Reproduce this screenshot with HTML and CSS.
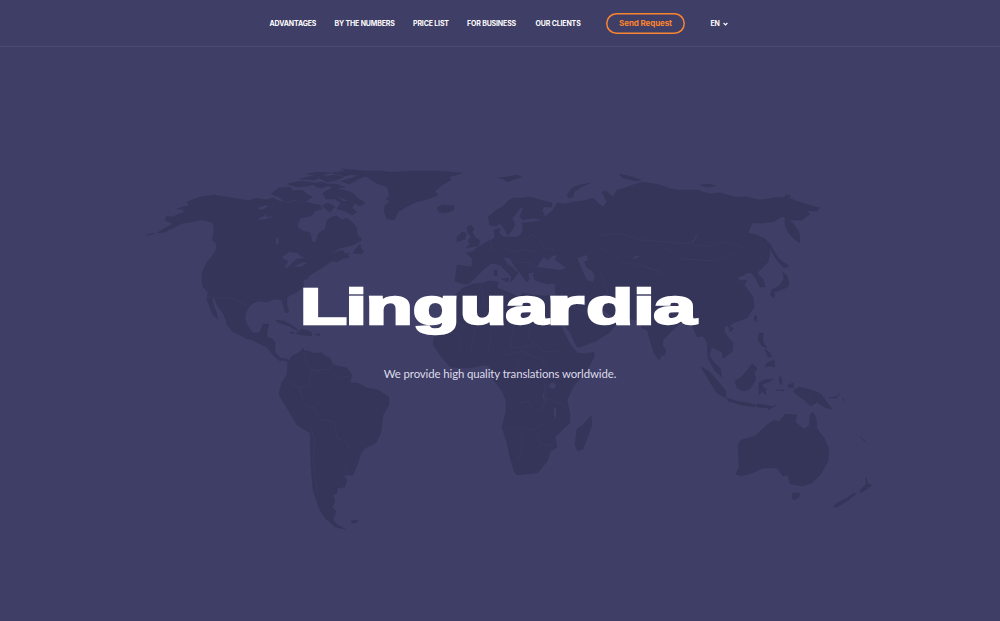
FILE: index.html
```html
<!DOCTYPE html>
<html lang="en">
<head>
<meta charset="utf-8">
<title>Linguardia</title>
<link rel="stylesheet" href="styles.css">
</head>
<body>
<div class="page">
  <svg class="map" viewBox="0 0 1000 621" aria-hidden="true">
    <g class="land">
      <!-- North and Central America -->
      <path d="M165 220L167 216 172 217 177 215 182 213 185 211 181 209 177 209 183 207 189 206 187 202 190 201 200 197 207 196 215 195 225 197 240 199 248 201 257 198 265 200 273 198 279 201 287 203 297 201 307 202 314 204 320 205 322 209 315 211 311 216 300 218 297 227 303 231 310 233 312 242 316 242 318 234 325 229 327 220 332 217 337 216 342 220 347 218 353 223 357 228 357 234 362 240 353 245 340 248 333 252 330 257 336 252 343 250 345 254 350 253 346 257 337 262 332 261 323 267 315 272 310 275 307 279 303 280 304 286 297 292 290 295 287 298 287 305 289 312 286 313 284 309 282 300 274 299 267 302 259 301 253 303 249 307 246 312 245 318 247 325 253 333 258 333 261 330 263 324 269 324 267 331 267 337 272 339 275 342 275 352 280 358 287 359 288 362 283 360 280 361 273 355 267 347 260 344 253 340 247 339 240 335 233 332 227 325 226 320 223 313 218 307 214 297 212 299 214 306 217 315 218 319 213 315 210 308 207 299 208 292 203 287 202 282 202 273 206 264 213 255 217 248 216 243 212 240 214 232 213 223 208 221 200 220 192 222 183 223 175 227 165 232 157 233 165 228 173 224z"/>
      <!-- Canadian archipelago -->
      <path d="M271 194L279 188 290 187 293 191 302 190 307 194 312 197 306 201 294 200 285 202 279 197zM287 184l14-3 14 2-6 3-12 1zM300 179l16-4 10 1-12 4zM306 174l12-2 12 1-8 2zM312 184l9-2 8 3-7 3-6-1zM320 178l15-3 9 2-10 4-8 1zM331 173l14-2 10 2-9 3zM341 181l11-3 8-3 10-1-11 5-10 5z"/>
      <path d="M323 193L332 188 344 190 352 193 359 199 365 203 360 206 354 203 352 208 357 212 352 215 345 211 337 209 341 203 335 199 326 199zM341 174l15-3 26 0 12 2-18 3-17-1zM322 206l6-3 7 4-5 5zM326 184l10 0 9 3-11 2zM341 169l14 1 8 1-11 2z"/>
      <path d="M353 253L355 250 360 244 361 248 364 252 361 254zM276 320l8 1 12 7 2 3-9-5-12-4zM301 329l10 3 1 4-8-1-8-1zM289 332l5 0 0 2zM315 334l5 0-1 2zM146 235l8-2 0 1zM341 258l8-2-1 2z"/>
      <!-- Greenland and Iceland -->
      <path d="M366 176L381 173 411 171 438 171 462 173 449 177 451 180 442 185 435 191 438 195 428 199 416 202 406 207 398 212 394 220 387 219 384 211 385 205 390 202 386 199 390 196 387 187 376 183z"/>
      <path d="M437 208l5-3 12 1 0 4-8 3-7-1z"/>
      <!-- South America -->
      <path d="M288 362L292 356 300 352 303 348 304 351 308 351 313 353 322 353 325 356 330 358 333 365 347 368 352 375 350 383 357 383 367 388 378 390 389 397 389 405 383 415 381 432 376 443 365 448 361 453 358 463 353 475 343 475 347 480 345 487 337 488 337 493 333 495 335 502 332 507 336 511 333 520 338 525 345 529 335 527 325 518 320 510 313 490 311 467 310 433 297 425 287 408 279 395 280 389 282 382 287 375z"/>
      <path d="M351 521l6-1 1 2-6 1z"/>
      <!-- Europe and Asia -->
      <path d="M457 265L472 267 472 258 466 253 472 252 478 247 487 242 495 238 494 230 500 228 499 233 503 237 517 237 521 234 523 230 522 223 532 222 543 220 533 218 523 220 520 217 522 211 524 208 520 208 516 214 512 218 515 225 512 230 508 235 505 230 500 223 496 226 490 225 488 217 495 211 502 207 507 202 513 198 521 198 530 197 540 200 552 203 552 207 544 207 542 210 545 217 553 210 557 203 565 204 573 202 583 201 593 198 598 203 603 207 607 202 602 192 606 191 613 197 617 190 625 188 633 185 643 182 660 185 668 188 677 190 697 190 710 194 720 193 735 197 747 197 760 200 773 198 787 197 796 201 803 203 812 206 820 208 817 211 807 211 810 214 802 220 790 220 795 226 799 232 800 243 793 238 788 232 785 225 785 217 781 217 773 222 760 223 752 223 748 233 757 235 763 238 768 243 770 252 768 262 760 270 757 273 763 279 765 287 760 287 755 277 751 273 747 273 742 276 737 277 740 281 747 280 744 285 748 290 753 297 754 307 747 318 733 323 729 327 725 325 724 332 733 343 732 352 723 358 722 352 717 350 712 347 709 355 713 361 720 368 722 377 715 371 708 358 707 342 703 336 697 337 693 327 688 322 680 323 663 340 662 355 659 360 654 353 647 330 643 329 637 320 624 318 612 317 606 312 598 306 606 317 615 319 617 323 610 332 596 341 580 347 577 347 571 334 563 323 558 308 556 300 555 283 548 284 540 282 535 280 533 275 535 272 528 273 529 279 527 282 520 273 515 267 510 258 503 257 508 265 513 268 518 273 515 277 511 282 511 276 500 265 492 263 485 268 480 273 473 280 468 284 463 284 455 281z"/>
      <path d="M467 227L471 225 474 229 472 232 475 237 480 241 478 246 471 247 466 248 470 244 468 241 471 237 468 233zM457 237l5-5 4 1-1 6-8 3zM494 270l3 0 0 6-3-1zM501 279l8-1-1 4zM498 178l8-1 11-2 5 2-10 3-4 2-5-3zM567 195l5-7 8-3 10-2-9 4-7 5-1 5-4 1zM619 174l10 2 12 4-5 1-13-3zM700 185l10-1 6 2-9 1zM785 195l6 1-5 1zM763 237L770 244 778 258 786 264 789 266 784 268 779 263 772 252zM783 272L787 276 789 282 788 287 778 291 772 293 771 290 779 286 784 279zM771 293l4 1-1 4-4-3zM755 315l2 2-1 5-2-3zM729 327l5 1-4 4zM759 333l4 0 0 9 4 6-5-2-4-6zM765 349l4 3 3 5-4 0zM767 363l7-3 1 7-5-1-5 1zM662 345l4 5-2 6-3-3z"/>
      <!-- Africa and Madagascar -->
      <path d="M463 288L473 284 483 283 490 281 498 282 497 288 508 292 518 297 523 293 532 295 545 296 553 295 555 300 551 301 557 313 563 330 568 340 572 347 578 353 586 354 594 352 594 357 587 370 573 387 567 400 570 414 570 423 563 429 555 437 557 447 550 452 548 460 541 469 537 473 526 474 517 475 514 471 510 457 507 443 502 427 506 412 506 400 502 391 496 383 492 378 492 370 488 366 483 365 475 367 467 368 450 367 440 355 433 345 434 336 436 330 447 317 449 307 453 297z"/>
      <path d="M591 416L592 424 588 436 583 449 578 451 575 445 577 429 583 425z"/>
      <!-- Indonesia, the Philippines and New Guinea -->
      <path d="M701 367L709 371 720 384 726 391 726 398 717 393 710 382zM727 398l9 3 13 2 7 2-1 2-13-2-14-4zM757 404l9 1 7 2-3 1-13-1zM768 409l8-4-7 5zM735 381L740 378 745 373 752 364 757 368 754 374 756 379 750 389 744 391 737 388zM759 383l5-3 9-1-4 3-7 2 1 4 4 1-2 1 1 5-4-4-3 4zM780 376l2 4-1 5-2-4zM788 385l5-2 1 5-6-1zM776 390l8 0 0 1zM793 391L799 387 812 390 821 394 826 401 832 409 826 408 817 402 811 406 803 399 796 394zM829 398l9-2 1-3-3 5zM842 398l3 2 0 1zM860 437l6 5-2-1z"/>
      <!-- Australia and New Zealand -->
      <path d="M736 474L739 467 738 445 741 440 755 436 767 425 774 420 779 422 785 414 797 415 795 422 804 429 809 426 810 415 813 412 816 418 817 429 824 438 829 449 828 461 821 474 812 483 803 486 790 484 788 475 783 476 777 468 763 468 752 473 741 476z"/>
      <path d="M793 493l7 0-1 4-5 3-2-2zM866 477l2 7 4 1-5 4-7 4 1-4 5-5zM854 493l2 1-9 7-10 6-4 0 4-4 10-5z"/>
    </g>
    <!-- Lakes and inland seas -->
    <g class="water">
      <path d="M537 267L543 257 548 260 552 256 557 255 555 260 566 268 560 270 545 268zM577 258L587 255 588 260 584 262 587 268 592 271 595 277 593 282 587 280 584 274zM690 243l5-5 1-4 1 3-4 5-3 1zM282 257l7-5 8 1 7 5-7 1-6 5-5 5-1-2 3-6-3-1zM294 266l10-4 3 1-7 4zM276 239l2-2 1 4-1 4-2-1zM257 208l9-3 3 1-7 4zM258 219l6-3 2-2 0 3 9-1-9 3-6 1zM549 384l5-2 2 3-2 4-4-1zM543 389l1 8 3 7-4-6zM554 407l2 1 0 12-2-5z"/>
      <path d="M532 222l9-1-5 1zM633 257l9-2-7 4zM337 196l11 5-5 0z"/>
    </g>
    <g class="borders">
      <path d="M218 251h58M205 297l30 2 12 7M490 239l2 10-7 5M500 244l9 8 15-2 14 2M500 259l18 3 13 1M524 241l8-7 7 6 6 8 10 2M506 265l9 11M530 263l7 5M600 235l22-1 20 6 25 2 25 2 15 3 18-5 22 6M600 247l23 15 15 4M640 265l23 8M665 248l18 11 32 2 20-9M569 285v20l19 8M600 270l8 24M560 280l-7 10"/>
      <path d="M447 300v18l20 10 25 0 12-16M481 284l3 20 25 18M532 295v22M504 312l10 16-4 20 22-2M447 330l12 6 0 20M475 328l-4 22M491 332l-3 22M532 314l-4 24 16 14 18-2M505 355l17-4 20 9M502 377l15-6 2-12M519 403l10-2 4 8 9 0 4-8-2-18M503 428h20l12 2 10-8M522 430v18l-4 12M535 432l6 12 12 2M541 358l8 14 14 8M548 399l17 6"/>
      <path d="M304 354l3 12 15 8M286 380l14 8 9-3 2-14 20-2 5-10M299 389l6 16 10 3 5 11 15 3 2 16 10 4 2 7M309 424l6 16-2 20 4 30M342 465l7 9M332 370l4 8 14-2M810 391v12"/>
    </g>
  </svg>

  <header class="header">
    <nav class="nav">
      <a class="link advantages">ADVANTAGES</a>
      <a class="link numbers">BY THE NUMBERS</a>
      <a class="link price">PRICE LIST</a>
      <a class="link business">FOR BUSINESS</a>
      <a class="link clients">OUR CLIENTS</a>
    </nav>
    <a class="request">Send Request</a>
    <a class="language">EN
      <svg class="chevron" viewBox="0 0 5 4"><path d="M.6 1l1.9 1.9L4.4 1"/></svg>
    </a>
  </header>

  <main class="hero">
    <h1 class="title"><span class="kern-l">L</span><span class="kern-i">i</span>ng<span class="kern-ua">ua</span><span class="wide-r">r</span>d<span class="kern-i">i</span>a</h1>
    <p class="tagline">We provide high quality translations worldwide.</p>
  </main>
</div>
</body>
</html>
```

FILE: styles.css
```css
* { box-sizing: border-box; }
body { margin: 0; background: #3f3e66; color: #fff; font-family: Lato, "Liberation Sans", sans-serif; }
.page { position: relative; width: 1000px; height: 621px; overflow: hidden; }
.map { position: absolute; inset: 0; width: 1000px; height: 621px; }
.land { fill: #353459; stroke: #353459; stroke-width: .5; stroke-linejoin: round; }
.water { fill: #3f3e66; }
.borders { fill: none; stroke: #3f3e65; stroke-width: .5; }

.header { position: relative; display: flex; align-items: center; height: 47px; padding-left: 269.5px; border-bottom: 1px solid #4b4b75; }
.nav { display: flex; gap: 18.5px; padding-top: 1px; }
.link { font-family: Inter, sans-serif; font-size: 7px; font-weight: 700; line-height: 10px; letter-spacing: -.15px; white-space: nowrap; }
.advantages { width: 46.5px; }
.numbers { width: 60px; }
.price { width: 35.5px; }
.business { width: 50px; }
.clients { width: 45.5px; }
.request { width: 79px; height: 21px; margin-left: 25px; border-radius: 11px; box-shadow: inset 0 0 0 1.5px #f98532; color: #fd842b; font-family: Inter, sans-serif; font-size: 8px; font-weight: 700; line-height: 21px; letter-spacing: -.1px; text-align: center; }
.language { display: flex; align-items: center; gap: 3px; padding-top: 1px; margin-left: 25.5px; font-family: Inter, sans-serif; font-size: 7px; font-weight: 700; line-height: 10px; letter-spacing: -.2px; }
.chevron { width: 5px; height: 4px; fill: none; stroke: #fff; stroke-width: 1.2; }

.hero { position: relative; display: flex; flex-direction: column; align-items: center; padding-top: 275px; margin-top: -47px; }
.title { margin: 0; padding-right: 2px; font-family: "Liberation Sans", Arial, sans-serif; font-size: 50px; font-weight: 700; line-height: 64px; white-space: nowrap; transform: scaleX(1.54); -webkit-text-stroke: 2.4px #fff; }
.kern-l { letter-spacing: -1px; }
.kern-i { letter-spacing: -.8px; }
.kern-ua { letter-spacing: -.8px; }
.wide-r { display: inline-block; margin-right: 6px; transform: scaleX(1.25); transform-origin: left; }
.tagline { margin: 26px 0 0; color: #dcdbe8; font-size: 11.4px; line-height: 17px; letter-spacing: -.1px; white-space: nowrap; }
```
